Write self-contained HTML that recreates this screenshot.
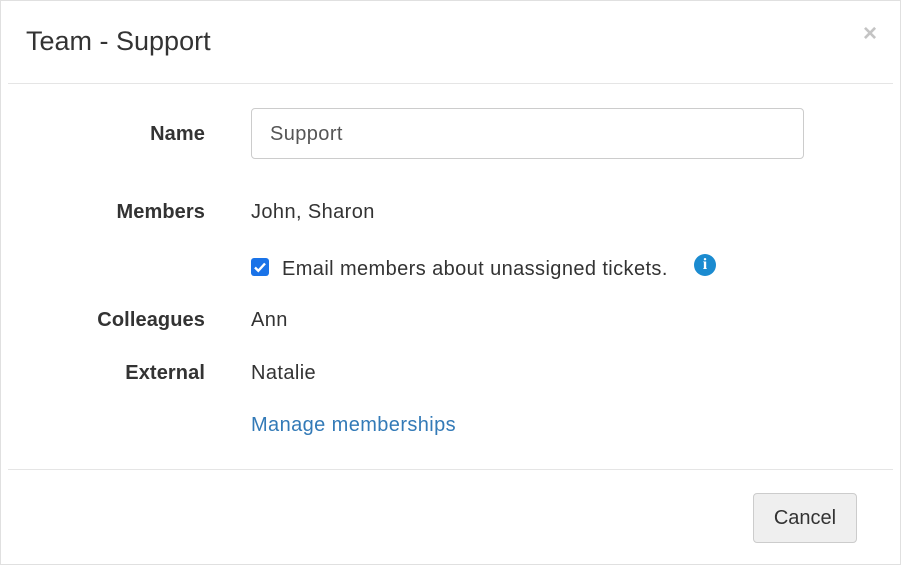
<!DOCTYPE html>
<html><head><style>
html,body{margin:0;padding:0}
body{width:901px;height:565px;position:relative;background:#fff;font-family:"Liberation Sans",Arial,sans-serif;color:#333;overflow:hidden}
.frame{position:absolute;left:0;top:0;width:899px;height:563px;border:1px solid #e0e0e0}
.a{position:absolute;white-space:nowrap}
.hr{position:absolute;left:8px;width:885px;height:1px;background:#e5e5e5}
.lbl{font-weight:bold;font-size:20px;right:696px;text-align:right;letter-spacing:0.1px}
.val{font-size:20px;left:251px;letter-spacing:0.4px}
</style></head><body>
<div class="frame"></div>
<div class="a" style="left:26px;top:26px;font-size:27px;color:#333">Team - Support</div>
<div class="a" style="left:863px;top:20px;font-size:24px;font-weight:bold;color:#c4c4c4">×</div>
<div class="hr" style="top:83px"></div>
<div class="a lbl" style="top:123px">Name</div>
<div class="a" style="left:251px;top:108px;width:551px;height:49px;border:1px solid #ccc;border-radius:4px;"></div>
<div class="a val" style="left:270px;top:123px;color:#555">Support</div>
<div class="a lbl" style="top:201px">Members</div>
<div class="a val" style="top:201px">John, Sharon</div>
<div class="a" style="left:251px;top:258px;width:18px;height:18px;background:#1a73e8;border-radius:3px"><svg width="18" height="18" viewBox="0 0 18 18"><path d="M4 9.5l3.3 3.3L14 5.5" fill="none" stroke="#fff" stroke-width="2.4"/></svg></div>
<div class="a val" style="left:282px;top:258px">Email members about unassigned tickets.</div>
<div class="a" style="left:694px;top:254px;width:22px;height:22px;border-radius:50%;background:#1b8bd0;color:#fff;font:bold 16px/22px 'Liberation Serif',serif;text-align:center">i</div>
<div class="a lbl" style="top:309px">Colleagues</div>
<div class="a val" style="top:309px">Ann</div>
<div class="a lbl" style="top:362px">External</div>
<div class="a val" style="top:362px">Natalie</div>
<div class="a val" style="top:414px;color:#337ab7">Manage memberships</div>
<div class="hr" style="top:469px"></div>
<div class="a" style="left:753px;top:493px;width:102px;height:48px;border:1px solid #ccc;border-radius:4px;background:#efefef;font-size:20px;line-height:48px;text-align:center">Cancel</div>
</body></html>
